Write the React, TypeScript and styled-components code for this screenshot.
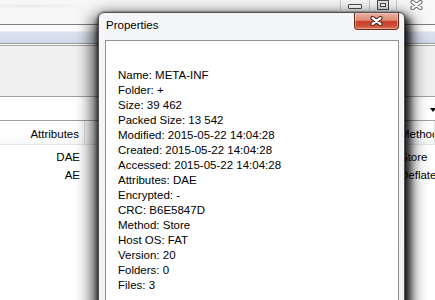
import React from 'react';
import styled, { createGlobalStyle } from 'styled-components';

const UI_FONT = `'Liberation Sans', Arial, sans-serif`;

const GlobalStyle = createGlobalStyle`
  html, body {
    margin: 0;
    padding: 0;
    background: #fff;
  }
  body {
    font-family: ${UI_FONT};
  }
`;

const Desktop = styled.div`
  position: relative;
  width: 435px;
  height: 300px;
  overflow: hidden;
  font-family: ${UI_FONT};
  font-size: 11.5px;
  color: #000;
  background: #fff;
`;

/* ---------- main 7-Zip window (behind) ---------- */

const MainWindow = styled.div`
  display: flex;
  flex-direction: column;
  height: 100%;
`;

const TitleBar = styled.div`
  height: 24px;
  display: flex;
  justify-content: flex-end;
  align-items: flex-start;
  background: radial-gradient(ellipse at 30px 6px, #e9e9e9 0, #f6f6f6 60px, #f9f9f9 100%);
  border-bottom: 1px solid #7c7c7c;
`;

const CaptionButton = styled.div<{ $w: number }>`
  width: ${(p) => p.$w}px;
  height: 10px;
  box-sizing: border-box;
  border-left: 1px solid #c9c9c9;
  display: flex;
  justify-content: center;
  align-items: flex-end;
`;

const MinGlyph = styled.span`
  width: 12px;
  height: 3px;
  margin-bottom: 1px;
  border: 1px solid #4d4d4d;
  border-radius: 1px;
  background: #fff;
`;

const MaxGlyph = styled.span`
  width: 10px;
  height: 8px;
  border: 1px solid #4d4d4d;
  background: #e4e4e4;
  display: flex;
  justify-content: center;
  align-items: center;

  &::after {
    content: '';
    width: 4px;
    height: 2px;
    border: 1px solid #4d4d4d;
    background: #fff;
  }
`;

const MenuBand = styled.div`
  height: 18px;
  background: linear-gradient(to bottom, #fdfdfe 0, #fbfbfd 6px, #dde2f0 7px, #d3d9ea 100%);
  border-bottom: 1px solid #9a9a9a;
`;

const BandSplit = styled.div`
  height: 1px;
  background: #fff;
  border-bottom: 1px solid #a3a3a3;
`;

const Toolbar = styled.div`
  height: 50px;
  background: #f0f0f0;
  border-bottom: 1px solid #a0a0a0;
`;

const AddressBar = styled.div`
  height: 23px;
  display: flex;
  justify-content: flex-end;
  align-items: center;
  background: #fff;
  border-bottom: 1px solid #a0a0a0;
`;

const DropArrow = styled.span`
  width: 0;
  height: 0;
  margin-right: -1px;
  margin-top: 3px;
  border-left: 3.5px solid transparent;
  border-right: 3.5px solid transparent;
  border-top: 4px solid #000;
`;

const ListGrid = styled.div`
  display: grid;
  grid-template-columns: 85px 311px 1fr;
`;

const HeaderRow = styled(ListGrid)`
  height: 23px;
  background: linear-gradient(to bottom, #fff 0, #fff 50%, #f7f8f9 100%);
  border-bottom: 1px solid #e5e5e5;
`;

const HeaderCell = styled.div<{ $right?: boolean }>`
  padding: 4px 5px 0 4px;
  line-height: 19px;
  white-space: nowrap;
  overflow: hidden;
  text-align: ${(p) => (p.$right ? 'right' : 'left')};
  border-right: 1px solid #e2e2e2;
`;

const Rows = styled.div`
  padding-top: 3px;
  background: #fff;
`;

const Row = styled(ListGrid)`
  height: 18px;
  line-height: 18px;
`;

const Cell = styled.div<{ $right?: boolean }>`
  padding: 0 5px 0 4px;
  white-space: nowrap;
  overflow: hidden;
  text-align: ${(p) => (p.$right ? 'right' : 'left')};
`;

/* ---------- properties dialog (front) ---------- */

const Dialog = styled.div`
  position: absolute;
  left: 98px;
  top: 12px;
  width: 307px;
  height: 310px;
  box-sizing: border-box;
  display: flex;
  flex-direction: column;
  padding: 0 5px 0 6px;
  border: 1px solid #505050;
  border-radius: 6px 6px 0 0;
  background: linear-gradient(to bottom, #f5f6f9 0, #eff1f5 100%);
  box-shadow:
    0 9px 17px 5px rgba(0, 0, 0, 0.8),
    4px 5px 7px 1px rgba(0, 0, 0, 0.65),
    -1px 4px 5px rgba(0, 0, 0, 0.45),
    0 0 2px rgba(0, 0, 0, 0.6);
`;

const DialogTitleBar = styled.div`
  height: 27px;
  display: flex;
  justify-content: space-between;
  align-items: flex-start;
`;

const DialogTitle = styled.div`
  padding: 5px 0 0 1px;
  line-height: 15px;
`;

const CloseButton = styled.div`
  width: 45px;
  height: 17px;
  box-sizing: border-box;
  display: flex;
  justify-content: center;
  align-items: center;
  border: 1px solid #6e2a1e;
  border-top: none;
  border-radius: 0 0 4px 4px;
  background: linear-gradient(
    to bottom,
    #eab0a3 0,
    #df8d79 45%,
    #c8442c 52%,
    #c94a31 75%,
    #dc7455 100%
  );
  box-shadow: inset 0 0 0 1px rgba(255, 220, 210, 0.45);
`;

const InfoPanel = styled.div`
  flex: 1;
  padding: 27px 12px;
  background: #fff;
  border: 1px solid #8f9090;
  line-height: 15px;
`;

const InfoLine = styled.div`
  white-space: nowrap;
`;

const CloseX = ({ color, outline }: { color: string; outline: string }) => (
  <svg width="13" height="10" viewBox="0 0 13 10">
    <path d="M2.5 2 L10.5 8 M10.5 2 L2.5 8" stroke={outline} strokeWidth="4.2" strokeLinecap="round" />
    <path d="M2.5 2 L10.5 8 M10.5 2 L2.5 8" stroke={color} strokeWidth="2.2" strokeLinecap="round" />
  </svg>
);

const properties: [string, string][] = [
  ['Name', 'META-INF'],
  ['Folder', '+'],
  ['Size', '39 462'],
  ['Packed Size', '13 542'],
  ['Modified', '2015-05-22 14:04:28'],
  ['Created', '2015-05-22 14:04:28'],
  ['Accessed', '2015-05-22 14:04:28'],
  ['Attributes', 'DAE'],
  ['Encrypted', '-'],
  ['CRC', 'B6E5847D'],
  ['Method', 'Store'],
  ['Host OS', 'FAT'],
  ['Version', '20'],
  ['Folders', '0'],
  ['Files', '3'],
];

const listRows = [
  { attributes: 'DAE', method: 'Store' },
  { attributes: 'AE', method: 'Deflate' },
];

const App = () => (
  <Desktop>
    <GlobalStyle />
    <MainWindow>
      <TitleBar>
        <CaptionButton $w={29}>
          <MinGlyph />
        </CaptionButton>
        <CaptionButton $w={27}>
          <MaxGlyph />
        </CaptionButton>
        <CaptionButton $w={39}>
          <CloseX color="#fff" outline="#6a6a6a" />
        </CaptionButton>
      </TitleBar>
      <MenuBand />
      <BandSplit />
      <Toolbar />
      <AddressBar>
        <DropArrow />
      </AddressBar>
      <HeaderRow>
        <HeaderCell $right>Attributes</HeaderCell>
        <HeaderCell />
        <HeaderCell>Method</HeaderCell>
      </HeaderRow>
      <Rows>
        {listRows.map((r) => (
          <Row key={r.attributes}>
            <Cell $right>{r.attributes}</Cell>
            <Cell />
            <Cell>{r.method}</Cell>
          </Row>
        ))}
      </Rows>
    </MainWindow>

    <Dialog>
      <DialogTitleBar>
        <DialogTitle>Properties</DialogTitle>
        <CloseButton>
          <CloseX color="#fff" outline="#4b1a12" />
        </CloseButton>
      </DialogTitleBar>
      <InfoPanel>
        {properties.map(([label, value]) => (
          <InfoLine key={label}>
            {label}: {value}
          </InfoLine>
        ))}
      </InfoPanel>
    </Dialog>
  </Desktop>
);

export default App;
